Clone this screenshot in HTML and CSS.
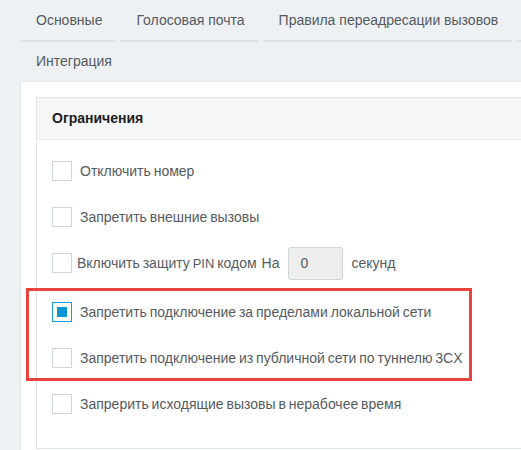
FILE: index.html
```html
<!DOCTYPE html>
<html lang="ru">
<head>
<meta charset="utf-8">
<title>Ограничения</title>
<link rel="stylesheet" href="styles.css">
</head>
<body>
<div class="viewport">
<div class="page">
  <div class="tabs">
    <div class="tab-row">
      <div class="tab">Основные</div>
      <div class="tab">Голосовая почта</div>
      <div class="tab">Правила переадресации вызовов</div>
      <div class="tab tab-spacer"></div>
    </div>
    <div class="tab-row">
      <div class="tab tab-plain">Интеграция</div>
    </div>
  </div>
  <div class="panel">
    <div class="card">
      <div class="card-header">Ограничения</div>
      <div class="card-body">
        <div class="row"><span class="cb"></span><span class="label">Отключить номер</span></div>
        <div class="row"><span class="cb"></span><span class="label">Запретить внешние вызовы</span></div>
        <div class="row row-pin"><span class="cb"></span><span class="label label-tight">Включить защиту <span class="pin">PIN</span> кодом</span><span class="label-na">На</span><span class="num-input">0</span><span class="label-sec">секунд</span></div>
        <div class="row"><span class="cb cb-checked"><span class="cb-mark"></span></span><span class="label">Запретить подключение за пределами локальной сети</span></div>
        <div class="row"><span class="cb"></span><span class="label">Запретить подключение из публичной сети по туннелю 3CX</span></div>
        <div class="row"><span class="cb"></span><span class="label">Запрерить исходящие вызовы в нерабочее время</span></div>
        <div class="highlight"></div>
      </div>
    </div>
  </div>
</div>
</div>
</body>
</html>
```

FILE: styles.css
```css
html, body {
  margin: 0;
  padding: 0;
  background: #eef1f3;
}
body {
  font-family: "Liberation Sans", Arial, sans-serif;
  color: #555b61;
}
.viewport {
  width: 100%;
  height: 100vh;
  overflow: hidden;
}
.page {
  width: 600px;
}
.tabs {
  padding-left: 20px;
}
.tab-row {
  display: flex;
  gap: 4px;
}
.tab {
  height: 40px;
  line-height: 40px;
  padding: 0 14px 0 16px;
  font-size: 14px;
  color: #555a5f;
  border-bottom: 2px solid #dfe4e7;
  white-space: nowrap;
}
.tab-spacer {
  width: 40px;
  padding: 0;
}
.tab-plain {
  border-bottom: none;
  height: 39px;
  line-height: 39px;
}
.panel {
  margin-left: 20px;
  background: #ffffff;
  border-left: 1px solid #e1e6e8;
  border-top: 1px solid #e3e8ea;
  padding: 15px 0 40px 15px;
}
.card {
  border: 1px solid #e0e5e7;
  background: #fff;
}
.card-header {
  height: 41px;
  line-height: 41px;
  padding-left: 15px;
  background: #f5f6f7;
  border-bottom: 1px solid #e6eaec;
  font-size: 14px;
  font-weight: bold;
  color: #1c1c1c;
}
.card-body {
  position: relative;
  padding: 8px 15px 21px 15px;
}
.row {
  display: flex;
  align-items: center;
  height: 46px;
  font-size: 14px;
  word-spacing: -1px;
}
.row-pin {
  margin-bottom: 3px;
}
.cb {
  width: 18px;
  height: 18px;
  border: 1px solid #cdd7da;
  background: #fff;
  flex: none;
  display: flex;
  align-items: center;
  justify-content: center;
}
.cb-checked {
  border-color: #1b9bd7;
}
.cb-mark {
  width: 10px;
  height: 10px;
  background: #0a96d4;
}
.label {
  margin-left: 8px;
  white-space: nowrap;
}
.label-tight {
  margin-left: 5px;
}
.pin {
  font-size: 13px;
}
.label-na {
  margin-left: 5px;
}
.num-input {
  margin-left: 8px;
  width: 41px;
  height: 31px;
  line-height: 31px;
  padding-left: 12px;
  background: #eeeeee;
  border: 1px solid #cfd6d9;
  border-radius: 3px;
}
.label-sec {
  margin-left: 9px;
}
.highlight {
  position: absolute;
  left: -11px;
  top: 148px;
  width: 440px;
  height: 87px;
  border: 3px solid #e8433e;
}
```
